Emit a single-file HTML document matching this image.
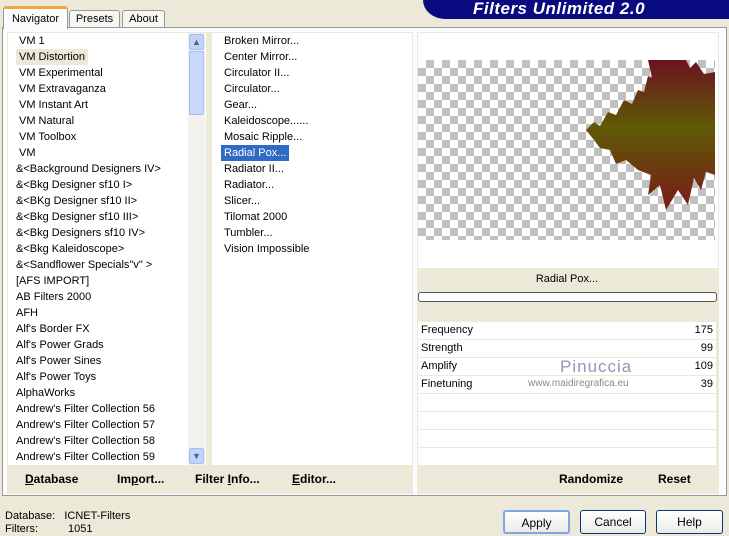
<!DOCTYPE html>
<html><head><style>
*{margin:0;padding:0;box-sizing:border-box}
body{width:729px;height:536px;background:#ECE9D8;font-family:"Liberation Sans",Tahoma,sans-serif;font-size:11px;color:#000;position:relative;overflow:hidden}
.a{position:absolute}
.banner{left:423px;top:0;width:306px;height:19px;background:#0A0A80;border-bottom-left-radius:22px 19px}
.banner span{position:absolute;left:50px;top:0px;color:#fff;font:italic bold 17px "Liberation Sans",sans-serif;line-height:17px;letter-spacing:.5px}
.tab{background:#F7F6F1;border:1px solid #919B9C;border-bottom:none;border-radius:3px 3px 0 0;text-align:center;font-size:11px}
.panel{left:2px;top:27px;width:725px;height:469px;background:#FCFCFE;border:1px solid #919B9C}
.list{background:#fff}
.row{position:absolute;height:16px;line-height:16px;white-space:nowrap}
.chk{background-color:#fff;background-image:linear-gradient(45deg,#c0c0c0 25%,transparent 25%,transparent 75%,#c0c0c0 75%),linear-gradient(45deg,#c0c0c0 25%,transparent 25%,transparent 75%,#c0c0c0 75%);background-size:16px 16px;background-position:0 0,8px 8px}
.prow{position:absolute;left:418px;width:298px;height:17px;background:#fff;line-height:17px;padding:0 3px}
.prow b{float:right;font-weight:normal}
.btn{position:absolute;top:510px;height:24px;border:1px solid #003C74;border-radius:3px;background:linear-gradient(#fff,#ECEBE6);text-align:center;line-height:22px;font-size:12px}
.bb{position:absolute;font-weight:bold;font-size:12px}
</style></head><body>
<div class="a banner"><span>Filters Unlimited 2.0</span></div>
<div class="a tab" style="left:69px;top:10px;width:51px;height:18px;line-height:17px">Presets</div>
<div class="a tab" style="left:122px;top:10px;width:43px;height:18px;line-height:17px">About</div>
<div class="a panel"></div>
<div class="a tab" style="left:3px;top:6px;width:65px;height:23px;line-height:21px;background:#FCFCFE;border-top:3px solid #F4A73A;z-index:2">Navigator</div>

<div class="a" style="left:7px;top:32px;width:406px;height:462px;background:#ECE9D8"></div>
<div class="a list" style="left:8px;top:33px;width:198px;height:432px"></div>
<div class="a" style="left:188px;top:33px;width:17px;height:432px;background:#F3F1EC"></div>
<div class="a" style="left:189px;top:34px;width:15px;height:16px;background:#C1D3FB;border:1px solid #A6BDF0;border-radius:2px;color:#4D6185;font-size:9px;text-align:center;line-height:14px">&#9650;</div>
<div class="a" style="left:189px;top:51px;width:15px;height:64px;background:#C8D7FC;border:1px solid #A6BDF0;border-radius:2px"></div>
<div class="a" style="left:189px;top:448px;width:15px;height:16px;background:#C1D3FB;border:1px solid #A6BDF0;border-radius:2px;color:#4D6185;font-size:9px;text-align:center;line-height:14px">&#9660;</div>
<div class="a list" style="left:212px;top:33px;width:200px;height:432px"></div>

<div class="row" style="left:19px;top:33px">VM 1</div>
<div class="row" style="left:16px;top:49px;background:#ECE9D8;padding:0 3px;width:72px">VM Distortion</div>
<div class="row" style="left:19px;top:65px">VM Experimental</div>
<div class="row" style="left:19px;top:81px">VM Extravaganza</div>
<div class="row" style="left:19px;top:97px">VM Instant Art</div>
<div class="row" style="left:19px;top:113px">VM Natural</div>
<div class="row" style="left:19px;top:129px">VM Toolbox</div>
<div class="row" style="left:19px;top:145px">VM</div>
<div class="row" style="left:16px;top:161px">&amp;&lt;Background Designers IV&gt;</div>
<div class="row" style="left:16px;top:177px">&amp;&lt;Bkg Designer sf10 I&gt;</div>
<div class="row" style="left:16px;top:193px">&amp;&lt;BKg Designer sf10 II&gt;</div>
<div class="row" style="left:16px;top:209px">&amp;&lt;Bkg Designer sf10 III&gt;</div>
<div class="row" style="left:16px;top:225px">&amp;&lt;Bkg Designers sf10 IV&gt;</div>
<div class="row" style="left:16px;top:241px">&amp;&lt;Bkg Kaleidoscope&gt;</div>
<div class="row" style="left:16px;top:257px">&amp;&lt;Sandflower Specials"v" &gt;</div>
<div class="row" style="left:16px;top:273px">[AFS IMPORT]</div>
<div class="row" style="left:16px;top:289px">AB Filters 2000</div>
<div class="row" style="left:16px;top:305px">AFH</div>
<div class="row" style="left:16px;top:321px">Alf's Border FX</div>
<div class="row" style="left:16px;top:337px">Alf's Power Grads</div>
<div class="row" style="left:16px;top:353px">Alf's Power Sines</div>
<div class="row" style="left:16px;top:369px">Alf's Power Toys</div>
<div class="row" style="left:16px;top:385px">AlphaWorks</div>
<div class="row" style="left:16px;top:401px">Andrew's Filter Collection 56</div>
<div class="row" style="left:16px;top:417px">Andrew's Filter Collection 57</div>
<div class="row" style="left:16px;top:433px">Andrew's Filter Collection 58</div>
<div class="row" style="left:16px;top:449px">Andrew's Filter Collection 59</div>

<div class="row" style="left:224px;top:33px">Broken Mirror...</div>
<div class="row" style="left:224px;top:49px">Center Mirror...</div>
<div class="row" style="left:224px;top:65px">Circulator II...</div>
<div class="row" style="left:224px;top:81px">Circulator...</div>
<div class="row" style="left:224px;top:97px">Gear...</div>
<div class="row" style="left:224px;top:113px">Kaleidoscope......</div>
<div class="row" style="left:224px;top:129px">Mosaic Ripple...</div>
<div class="row" style="left:221px;top:145px;background:#316AC5;color:#fff;padding:0 3px;width:68px">Radial Pox...</div>
<div class="row" style="left:224px;top:161px">Radiator II...</div>
<div class="row" style="left:224px;top:177px">Radiator...</div>
<div class="row" style="left:224px;top:193px">Slicer...</div>
<div class="row" style="left:224px;top:209px">Tilomat 2000</div>
<div class="row" style="left:224px;top:225px">Tumbler...</div>
<div class="row" style="left:224px;top:241px">Vision Impossible</div>

<div class="bb" style="left:25px;top:472px"><u>D</u>atabase</div>
<div class="bb" style="left:117px;top:472px">Im<u>p</u>ort...</div>
<div class="bb" style="left:195px;top:472px">Filter <u>I</u>nfo...</div>
<div class="bb" style="left:292px;top:472px"><u>E</u>ditor...</div>

<div class="a" style="left:417px;top:32px;width:302px;height:462px;background:#ECE9D8"></div>
<div class="a" style="left:418px;top:33px;width:300px;height:235px;background:#fff"></div>
<div class="a chk" style="left:418px;top:60px;width:297px;height:180px"></div>
<svg class="a" style="left:586px;top:60px" width="130" height="155" viewBox="0 0 130 155">
<defs><linearGradient id="g" x1="0" y1="0" x2="0" y2="1"><stop offset="0" stop-color="#6E1220"/><stop offset=".45" stop-color="#5E5A06"/><stop offset="1" stop-color="#7A1A1A"/></linearGradient></defs>
<path d="M0 70 L8 62 L14 66 L22 52 L30 55 L38 40 L46 44 L52 30 L58 32 L62 16 L66 18 L62 0 L100 0 L104 8 L110 2 L118 14 L129 12 L129 115 L120 112 L115 130 L108 118 L102 145 L92 130 L80 150 L74 125 L62 135 L65 115 L52 110 L40 100 L30 104 L24 90 L14 88 L8 80 Z" fill="url(#g)"/>
</svg>
<div class="a" style="left:418px;top:269px;width:298px;height:20px;text-align:center;line-height:20px;font-size:11px">Radial Pox...</div>
<div class="a" style="left:418px;top:292px;width:299px;height:10px;border:1px solid #555;border-radius:3px;background:#fff"></div>
<div class="prow" style="top:322px">Frequency<b>175</b></div>
<div class="prow" style="top:340px">Strength<b>99</b></div>
<div class="prow" style="top:358px">Amplify<b>109</b></div>
<div class="prow" style="top:376px">Finetuning<b>39</b></div>
<div class="prow" style="top:394px"></div>
<div class="prow" style="top:412px"></div>
<div class="prow" style="top:430px"></div>
<div class="prow" style="top:448px"></div>
<div class="a" style="left:560px;top:357px;color:#9097B8;font-size:17px;letter-spacing:1px">Pinuccia</div>
<div class="a" style="left:528px;top:378px;color:#8A8A8A;font-size:10px">www.maidiregrafica.eu</div>
<div class="bb" style="left:559px;top:472px">Randomize</div>
<div class="bb" style="left:658px;top:472px">Reset</div>

<div class="a" style="left:5px;top:510px;line-height:13px">Database:&nbsp;&nbsp; ICNET-Filters<br>Filters:<span style="margin-left:30px">1051</span></div>
<div class="btn" style="left:503px;width:67px;border:2px solid #7FA6E6">Apply</div>
<div class="btn" style="left:580px;width:66px">Cancel</div>
<div class="btn" style="left:656px;width:67px">Help</div>
</body></html>
